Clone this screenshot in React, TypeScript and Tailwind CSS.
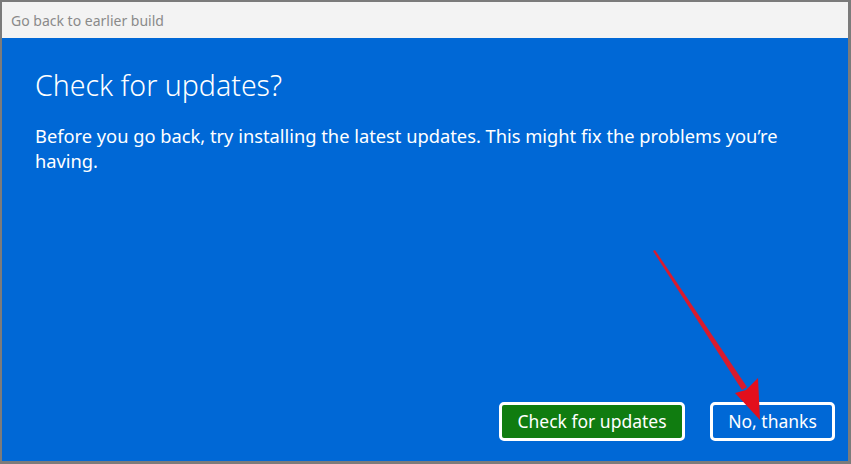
export default function App() {
  return (
    <div className="relative h-[464px] w-[851px] overflow-hidden bg-[#7b7b7b] pb-[3px] pl-[2px] pr-[3px] pt-[2px] font-['Noto_Sans',sans-serif]">
      <div className="flex h-full flex-col">
        <div className="flex h-[36px] items-center bg-[#f3f3f3] pl-[9px] text-[14px] text-[#8a8a8a]">
          Go back to earlier build
        </div>
        <div className="flex flex-1 flex-col bg-[#0068d6] pb-[20px] pl-[33px] pr-[13px] pt-[27px] text-white">
          <h1 className="text-[28.5px] font-light leading-[40px]">Check for updates?</h1>
          <p className="mt-[18px] whitespace-nowrap text-[18.3px] leading-[25px]">
            Before you go back, try installing the latest updates. This might fix the problems you’re
            <br />
            having.
          </p>
          <div className="mt-auto flex justify-end gap-[25px]">
            <button className="h-[39px] w-[186px] rounded-[5px] border-[3px] border-white bg-[#107c10] text-[17.5px] text-white">
              Check for updates
            </button>
            <button className="h-[39px] w-[125px] rounded-[5px] border-[3px] border-white bg-[#0068d6] text-[17.5px] text-white">
              No, thanks
            </button>
          </div>
        </div>
      </div>
      <svg className="pointer-events-none absolute left-0 top-0" width="851" height="464" viewBox="0 0 851 464">
        <polygon points="653,251 655,250 747,387 742,390" fill="#d81b2e" />
        <polygon points="760,420 735,393 746,390 754,382 758,378" fill="#e30f1c" />
      </svg>
    </div>
  );
}
